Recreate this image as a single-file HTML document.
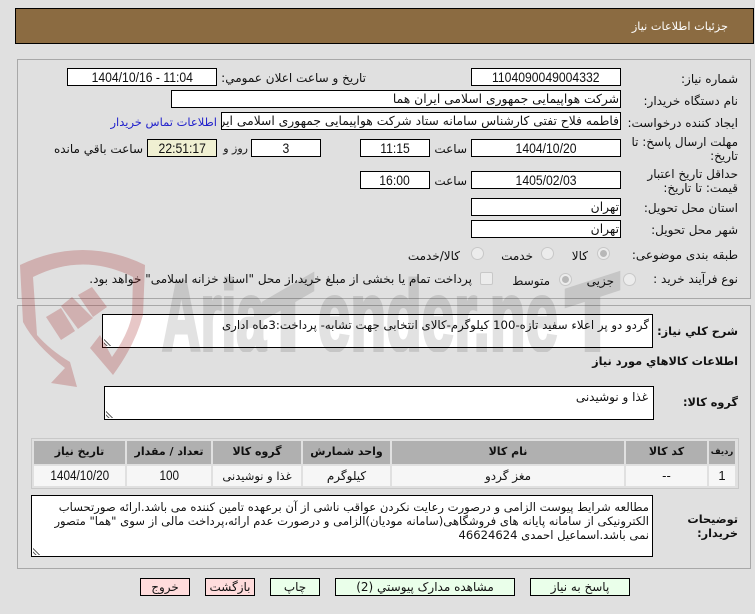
<!DOCTYPE html>
<html lang="fa"><head><meta charset="utf-8"><title>جزئیات اطلاعات نیاز</title>
<style>
html,body{margin:0;padding:0}
body{width:755px;height:614px;background:#e0e0e0;position:relative;overflow:hidden;font:12px/16px "DejaVu Sans","Liberation Sans",sans-serif;color:#111}
div{box-sizing:border-box}
.a{position:absolute}
.l{position:absolute;white-space:nowrap;direction:rtl;text-align:right}
.b{font-weight:bold;font-size:11.3px}
.f{position:absolute;height:18px;background:#fff;border:1px solid #000;line-height:16px;text-align:center;white-space:nowrap;overflow:hidden;direction:rtl;font-family:"Liberation Sans","DejaVu Sans",sans-serif;font-size:14px}
.n{display:inline-block;transform:scaleX(.87);direction:ltr}
.r{text-align:right;padding-right:1px;font-family:"DejaVu Sans",sans-serif;font-size:12.3px}
.ta{position:absolute;background:#fff;border:1px solid #000;direction:rtl;overflow:hidden}
.ta i{position:absolute;left:1px;bottom:1px;width:9px;height:9px;background:repeating-linear-gradient(45deg,transparent 0 1.5px,#666 1.5px 2.5px);clip-path:polygon(0 0,100% 100%,0 100%)}
.ra{position:absolute;width:13px;height:13px;border-radius:50%;background:#ececec;border:1px solid #c8c8c8}
.ra.c:after{content:"";position:absolute;left:2px;top:2px;width:7px;height:7px;border-radius:50%;background:#b8b8b8}
.h,.c1{position:absolute;text-align:center;white-space:nowrap;direction:rtl}
.h{top:441px;height:23px;background:#b0b0b0;font-weight:bold;line-height:22px;font-size:11px}
.c1{top:466px;height:20px;background:#f6f6f6;line-height:20px;font-size:12px}
.btn{position:absolute;top:578px;height:18px;border:1px solid #000;text-align:center;line-height:16px;white-space:nowrap;direction:rtl;font-size:12px}
.g{background:#eaffea}.p{background:#ffdcdc}
</style></head><body>
<div class="a" style="left:15px;top:8px;width:739px;height:36px;background:#8b6b41;border:1px solid #000"></div>
<div class="l" style="right:27px;top:19px;color:#fff;font-size:11.3px">جزئیات اطلاعات نیاز</div>

<div class="a" style="left:17px;top:59px;width:734px;height:240px;border:1px solid #a8a8a8"></div>
<div class="a" style="left:17px;top:305px;width:734px;height:264px;border:1px solid #a8a8a8"></div>

<div class="l" style="right:17px;top:71px">شماره نیاز:</div>
<div class="f" style="left:471px;top:68px;width:150px"><span class="n">1104090049004332</span></div>
<div class="l" style="right:389px;top:70px;">تاریخ و ساعت اعلان عمومي:</div>
<div class="f" style="left:67px;top:68px;width:150px"><span class="n">1404/10/16 - 11:04</span></div>

<div class="l" style="right:17px;top:93px">نام دستگاه خریدار:</div>
<div class="f r" style="left:171px;top:90px;width:450px">شرکت هواپیمایی جمهوری اسلامی ایران هما</div>

<div class="l" style="right:17px;top:115px">ایجاد کننده درخواست:</div>
<div class="f r" style="left:221px;top:112px;width:400px">فاطمه فلاح تفتی کارشناس سامانه ستاد شرکت هواپیمایی جمهوری اسلامی ایران</div>
<div class="l" style="right:538px;top:114px;color:#22c;font-size:11.5px">اطلاعات تماس خریدار</div>

<div class="l" style="right:17px;top:135px;line-height:14px">مهلت ارسال پاسخ: تا<br>تاریخ:</div>
<div class="f" style="left:471px;top:139px;width:150px"><span class="n">1404/10/20</span></div>
<div class="l" style="right:288px;top:141px">ساعت</div>
<div class="f" style="left:360px;top:139px;width:70px"><span class="n">11:15</span></div>
<div class="f" style="left:251px;top:139px;width:70px"><span class="n">3</span></div>
<div class="l" style="right:507px;top:141px;font-size:11px">روز و</div>
<div class="f" style="left:147px;top:139px;width:70px;background:#f0f0d2"><span class="n">22:51:17</span></div>
<div class="l" style="right:612px;top:141px">ساعت باقي مانده</div>

<div class="l" style="right:17px;top:167px;line-height:14px">حداقل تاریخ اعتبار<br>قیمت: تا تاریخ:</div>
<div class="f" style="left:471px;top:171px;width:150px"><span class="n">1405/02/03</span></div>
<div class="l" style="right:288px;top:173px">ساعت</div>
<div class="f" style="left:360px;top:171px;width:70px"><span class="n">16:00</span></div>

<div class="l" style="right:17px;top:200px">استان محل تحویل:</div>
<div class="f r" style="left:471px;top:198px;width:150px">تهران</div>
<div class="l" style="right:17px;top:222px">شهر محل تحویل:</div>
<div class="f r" style="left:471px;top:220px;width:150px">تهران</div>

<div class="l" style="right:17px;top:247px">طبقه بندی موضوعی:</div>
<div class="ra c" style="left:597px;top:247px"></div><div class="l" style="right:167px;top:248px">کالا</div>
<div class="ra" style="left:541px;top:247px"></div><div class="l" style="right:222px;top:248px">خدمت</div>
<div class="ra" style="left:471px;top:247px"></div><div class="l" style="right:295px;top:248px">کالا/خدمت</div>

<div class="l" style="right:17px;top:271px">نوع فرآیند خرید :</div>
<div class="ra" style="left:623px;top:273px"></div><div class="l" style="right:141px;top:273px">جزیی</div>
<div class="ra c" style="left:559px;top:273px"></div><div class="l" style="right:205px;top:273px">متوسط</div>
<div class="a" style="left:480px;top:272px;width:13px;height:13px;background:#ececec;border:1px solid #c8c8c8;border-radius:2px"></div>
<div class="l" style="right:283px;top:271px;width:385px;overflow:hidden">پرداخت تمام یا بخشی از مبلغ خرید،از محل "اسناد خزانه اسلامی" خواهد بود.</div>

<div class="l b" style="right:17px;top:324px">شرح کلي نیاز:</div>
<div class="ta" style="left:102px;top:314px;width:551px;height:34px"><i></i><div class="l" style="right:3px;top:2px;font-size:11.75px">گردو دو پر اعلاء سفید تازه-100 کیلوگرم-کالای انتخابی جهت تشابه- پرداخت:3ماه اداری</div></div>
<div class="l b" style="right:17px;top:354px">اطلاعات کالاهاي مورد نیاز</div>
<div class="l b" style="right:17px;top:395px">گروه کالا:</div>
<div class="ta" style="left:104px;top:386px;width:550px;height:34px"><i></i><div class="l" style="right:5px;top:2px">غذا و نوشیدنی</div></div>

<div class="a" style="left:31px;top:438px;width:708px;height:51px;border:1px solid #c8c8c8"></div>
<div class="h" style="left:34px;width:91px">تاریخ نیاز</div>
<div class="h" style="left:127px;width:84px">تعداد / مقدار</div>
<div class="h" style="left:213px;width:88px">گروه کالا</div>
<div class="h" style="left:303px;width:87px">واحد شمارش</div>
<div class="h" style="left:392px;width:232px">نام کالا</div>
<div class="h" style="left:626px;width:81px">کد کالا</div>
<div class="h" style="left:709px;width:26px;font-size:8.5px">ردیف</div>
<div class="c1" style="left:34px;width:91px;font-family:'Liberation Sans';font-size:13.5px"><span class="n">1404/10/20</span></div>
<div class="c1" style="left:127px;width:84px;font-family:'Liberation Sans';font-size:13.5px"><span class="n">100</span></div>
<div class="c1" style="left:213px;width:88px;font-size:11.5px">غذا و نوشیدنی</div>
<div class="c1" style="left:303px;width:87px">کیلوگرم</div>
<div class="c1" style="left:392px;width:232px">مغز گردو</div>
<div class="c1" style="left:626px;width:81px">--</div>
<div class="c1" style="left:709px;width:26px;font-family:'Liberation Sans';font-size:13px">1</div>

<div class="l b" style="right:17px;top:513px;line-height:14px">توضیحات<br>خریدار:</div>
<div class="ta" style="left:31px;top:495px;width:622px;height:62px"><i></i>
<div class="l" style="right:3px;top:3px;font-size:11.6px">مطالعه شرایط پیوست الزامی و درصورت رعایت نکردن عواقب ناشی از آن برعهده تامین کننده می باشد.ارائه صورتحساب</div>
<div class="l" style="right:3px;top:17px;font-size:11.6px">الکترونیکی از سامانه پایانه های فروشگاهی(سامانه مودیان)الزامی و درصورت عدم ارائه،پرداخت مالی از سوی "هما" متصور</div>
<div class="l" style="right:3px;top:31px;font-size:11.6px">نمی باشد.اسماعیل احمدی 46624624</div></div>

<div class="btn p" style="left:140px;width:50px">خروج</div>
<div class="btn p" style="left:205px;width:50px">بازگشت</div>
<div class="btn g" style="left:270px;width:50px">چاپ</div>
<div class="btn g" style="left:335px;width:180px">مشاهده مدارک پیوستي (2)</div>
<div class="btn g" style="left:530px;width:100px">پاسخ به نیاز</div>

<svg class="a" style="left:0;top:0;pointer-events:none" width="755" height="614" viewBox="0 0 755 614">
<defs><clipPath id="cp"><rect x="150" y="230" width="500" height="122"/></clipPath></defs>
<g fill="#a01e1e" fill-opacity=".25">
<path fill-rule="evenodd" d="M20 265Q83 235 145 265L143 315Q135 345 113 375L90 348L100 335L112 357Q128 335 132 315L133 277Q83 252 33 277L37 335Q50 350 70 362L77 387L51 383L65 368Q35 345 23 322Z"/>
<path d="M46 317L61 308L75 331L61 340Z"/>
<path d="M61 306L72 297L93 318L78 329Z"/>
<path d="M78 295L92 287L107 307L93 317Z"/>
</g>
<g clip-path="url(#cp)" opacity=".11" fill="#000" stroke="#000" stroke-width="4" font-family="Liberation Sans" font-weight="bold">
<text x="162" y="350" font-size="98" textLength="104" lengthAdjust="spacingAndGlyphs">Aria</text>
<text transform="translate(262 352) skewY(-30)" font-size="140" textLength="52" lengthAdjust="spacingAndGlyphs" y="48">T</text>
<text x="318" y="350" font-size="98" textLength="240" lengthAdjust="spacingAndGlyphs">ender.ne</text>
<text transform="translate(565 352) skewY(-18)" font-size="140" textLength="55" lengthAdjust="spacingAndGlyphs" y="35">T</text>
</g>
</svg>
</body></html>
